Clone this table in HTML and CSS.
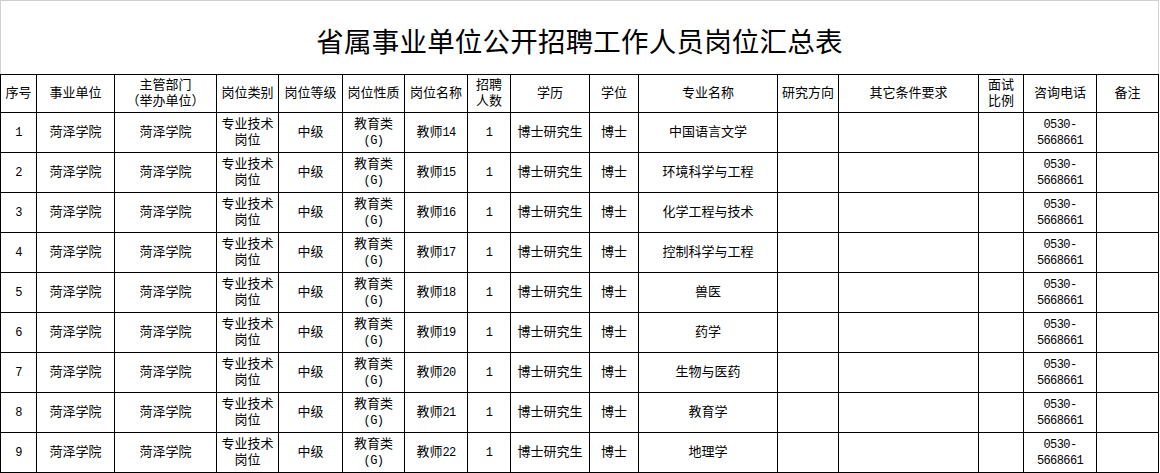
FILE: index.html
```html
<!DOCTYPE html>
<html lang="zh-CN">
<head>
<meta charset="utf-8">
<title>省属事业单位公开招聘工作人员岗位汇总表</title>
<link rel="stylesheet" href="styles.css">
</head>
<body>
<div class="sheet">
  <div class="title">省属事业单位公开招聘工作人员岗位汇总表</div>
  <table class="grid">
    <colgroup>
      <col class="w36"><col class="w78"><col class="w102"><col class="w62"><col class="w64"><col class="w62"><col class="w63"><col class="w43"><col class="w79"><col class="w49"><col class="w139"><col class="w61"><col class="w140"><col class="w45"><col class="w73"><col class="w62">
    </colgroup>
    <thead>
      <tr>
        <th>序号</th>
        <th>事业单位</th>
        <th>主管部门<br>（举办单位）</th>
        <th>岗位类别</th>
        <th>岗位等级</th>
        <th>岗位性质</th>
        <th>岗位名称</th>
        <th>招聘<br>人数</th>
        <th>学历</th>
        <th>学位</th>
        <th>专业名称</th>
        <th>研究方向</th>
        <th>其它条件要求</th>
        <th>面试<br>比例</th>
        <th>咨询电话</th>
        <th>备注</th>
      </tr>
    </thead>
    <tbody>
      <tr><td><span class="num">1</span></td><td>菏泽学院</td><td>菏泽学院</td><td>专业技术<br>岗位</td><td>中级</td><td>教育类<br><span class="num">(G)</span></td><td>教师<span class="num">14</span></td><td><span class="num">1</span></td><td>博士研究生</td><td>博士</td><td>中国语言文学</td><td></td><td></td><td></td><td><span class="num">0530-<br>5668661</span></td><td></td></tr>
      <tr><td><span class="num">2</span></td><td>菏泽学院</td><td>菏泽学院</td><td>专业技术<br>岗位</td><td>中级</td><td>教育类<br><span class="num">(G)</span></td><td>教师<span class="num">15</span></td><td><span class="num">1</span></td><td>博士研究生</td><td>博士</td><td>环境科学与工程</td><td></td><td></td><td></td><td><span class="num">0530-<br>5668661</span></td><td></td></tr>
      <tr><td><span class="num">3</span></td><td>菏泽学院</td><td>菏泽学院</td><td>专业技术<br>岗位</td><td>中级</td><td>教育类<br><span class="num">(G)</span></td><td>教师<span class="num">16</span></td><td><span class="num">1</span></td><td>博士研究生</td><td>博士</td><td>化学工程与技术</td><td></td><td></td><td></td><td><span class="num">0530-<br>5668661</span></td><td></td></tr>
      <tr><td><span class="num">4</span></td><td>菏泽学院</td><td>菏泽学院</td><td>专业技术<br>岗位</td><td>中级</td><td>教育类<br><span class="num">(G)</span></td><td>教师<span class="num">17</span></td><td><span class="num">1</span></td><td>博士研究生</td><td>博士</td><td>控制科学与工程</td><td></td><td></td><td></td><td><span class="num">0530-<br>5668661</span></td><td></td></tr>
      <tr><td><span class="num">5</span></td><td>菏泽学院</td><td>菏泽学院</td><td>专业技术<br>岗位</td><td>中级</td><td>教育类<br><span class="num">(G)</span></td><td>教师<span class="num">18</span></td><td><span class="num">1</span></td><td>博士研究生</td><td>博士</td><td>兽医</td><td></td><td></td><td></td><td><span class="num">0530-<br>5668661</span></td><td></td></tr>
      <tr><td><span class="num">6</span></td><td>菏泽学院</td><td>菏泽学院</td><td>专业技术<br>岗位</td><td>中级</td><td>教育类<br><span class="num">(G)</span></td><td>教师<span class="num">19</span></td><td><span class="num">1</span></td><td>博士研究生</td><td>博士</td><td>药学</td><td></td><td></td><td></td><td><span class="num">0530-<br>5668661</span></td><td></td></tr>
      <tr><td><span class="num">7</span></td><td>菏泽学院</td><td>菏泽学院</td><td>专业技术<br>岗位</td><td>中级</td><td>教育类<br><span class="num">(G)</span></td><td>教师<span class="num">20</span></td><td><span class="num">1</span></td><td>博士研究生</td><td>博士</td><td>生物与医药</td><td></td><td></td><td></td><td><span class="num">0530-<br>5668661</span></td><td></td></tr>
      <tr><td><span class="num">8</span></td><td>菏泽学院</td><td>菏泽学院</td><td>专业技术<br>岗位</td><td>中级</td><td>教育类<br><span class="num">(G)</span></td><td>教师<span class="num">21</span></td><td><span class="num">1</span></td><td>博士研究生</td><td>博士</td><td>教育学</td><td></td><td></td><td></td><td><span class="num">0530-<br>5668661</span></td><td></td></tr>
      <tr><td><span class="num">9</span></td><td>菏泽学院</td><td>菏泽学院</td><td>专业技术<br>岗位</td><td>中级</td><td>教育类<br><span class="num">(G)</span></td><td>教师<span class="num">22</span></td><td><span class="num">1</span></td><td>博士研究生</td><td>博士</td><td>地理学</td><td></td><td></td><td></td><td><span class="num">0530-<br>5668661</span></td><td></td></tr>
    </tbody>
  </table>
</div>
</body>
</html>
```
FILE: styles.css
```css
html, body {
  margin: 0;
  padding: 0;
  background: #ffffff;
}

.sheet {
  width: 1159px;
  font-family: "Liberation Mono", "Noto Sans CJK SC", monospace;
  color: #000000;
}

.title {
  box-sizing: border-box;
  height: 74px;
  border-top: 1px solid #d0d0d0;
  border-left: 1px solid #d0d0d0;
  border-right: 1px solid #d0d0d0;
  display: flex;
  align-items: center;
  justify-content: center;
  padding-top: 4px;
  font-family: "Noto Sans CJK SC", sans-serif;
  font-size: 27.5px;
  font-weight: 400;
  letter-spacing: 0.2px;
}

.grid {
  width: 1159px;
  table-layout: fixed;
  border-collapse: collapse;
  font-size: 13px;
  line-height: 16px;
}

.grid th,
.grid td {
  border: 1px solid #000000;
  padding: 0;
  text-align: center;
  vertical-align: middle;
  font-weight: 400;
  overflow: hidden;
  white-space: nowrap;
}

.grid thead tr { height: 38px; }
.grid tbody tr { height: 40px; }

.num {
  font-family: "Liberation Mono", monospace;
  font-size: 12px;
  letter-spacing: -0.6px;
}

.w36 { width: 36px; }
.w78 { width: 78px; }
.w102 { width: 102px; }
.w62 { width: 62px; }
.w64 { width: 64px; }
.w63 { width: 63px; }
.w43 { width: 43px; }
.w79 { width: 79px; }
.w49 { width: 49px; }
.w139 { width: 139px; }
.w61 { width: 61px; }
.w140 { width: 140px; }
.w45 { width: 45px; }
.w73 { width: 73px; }
```
